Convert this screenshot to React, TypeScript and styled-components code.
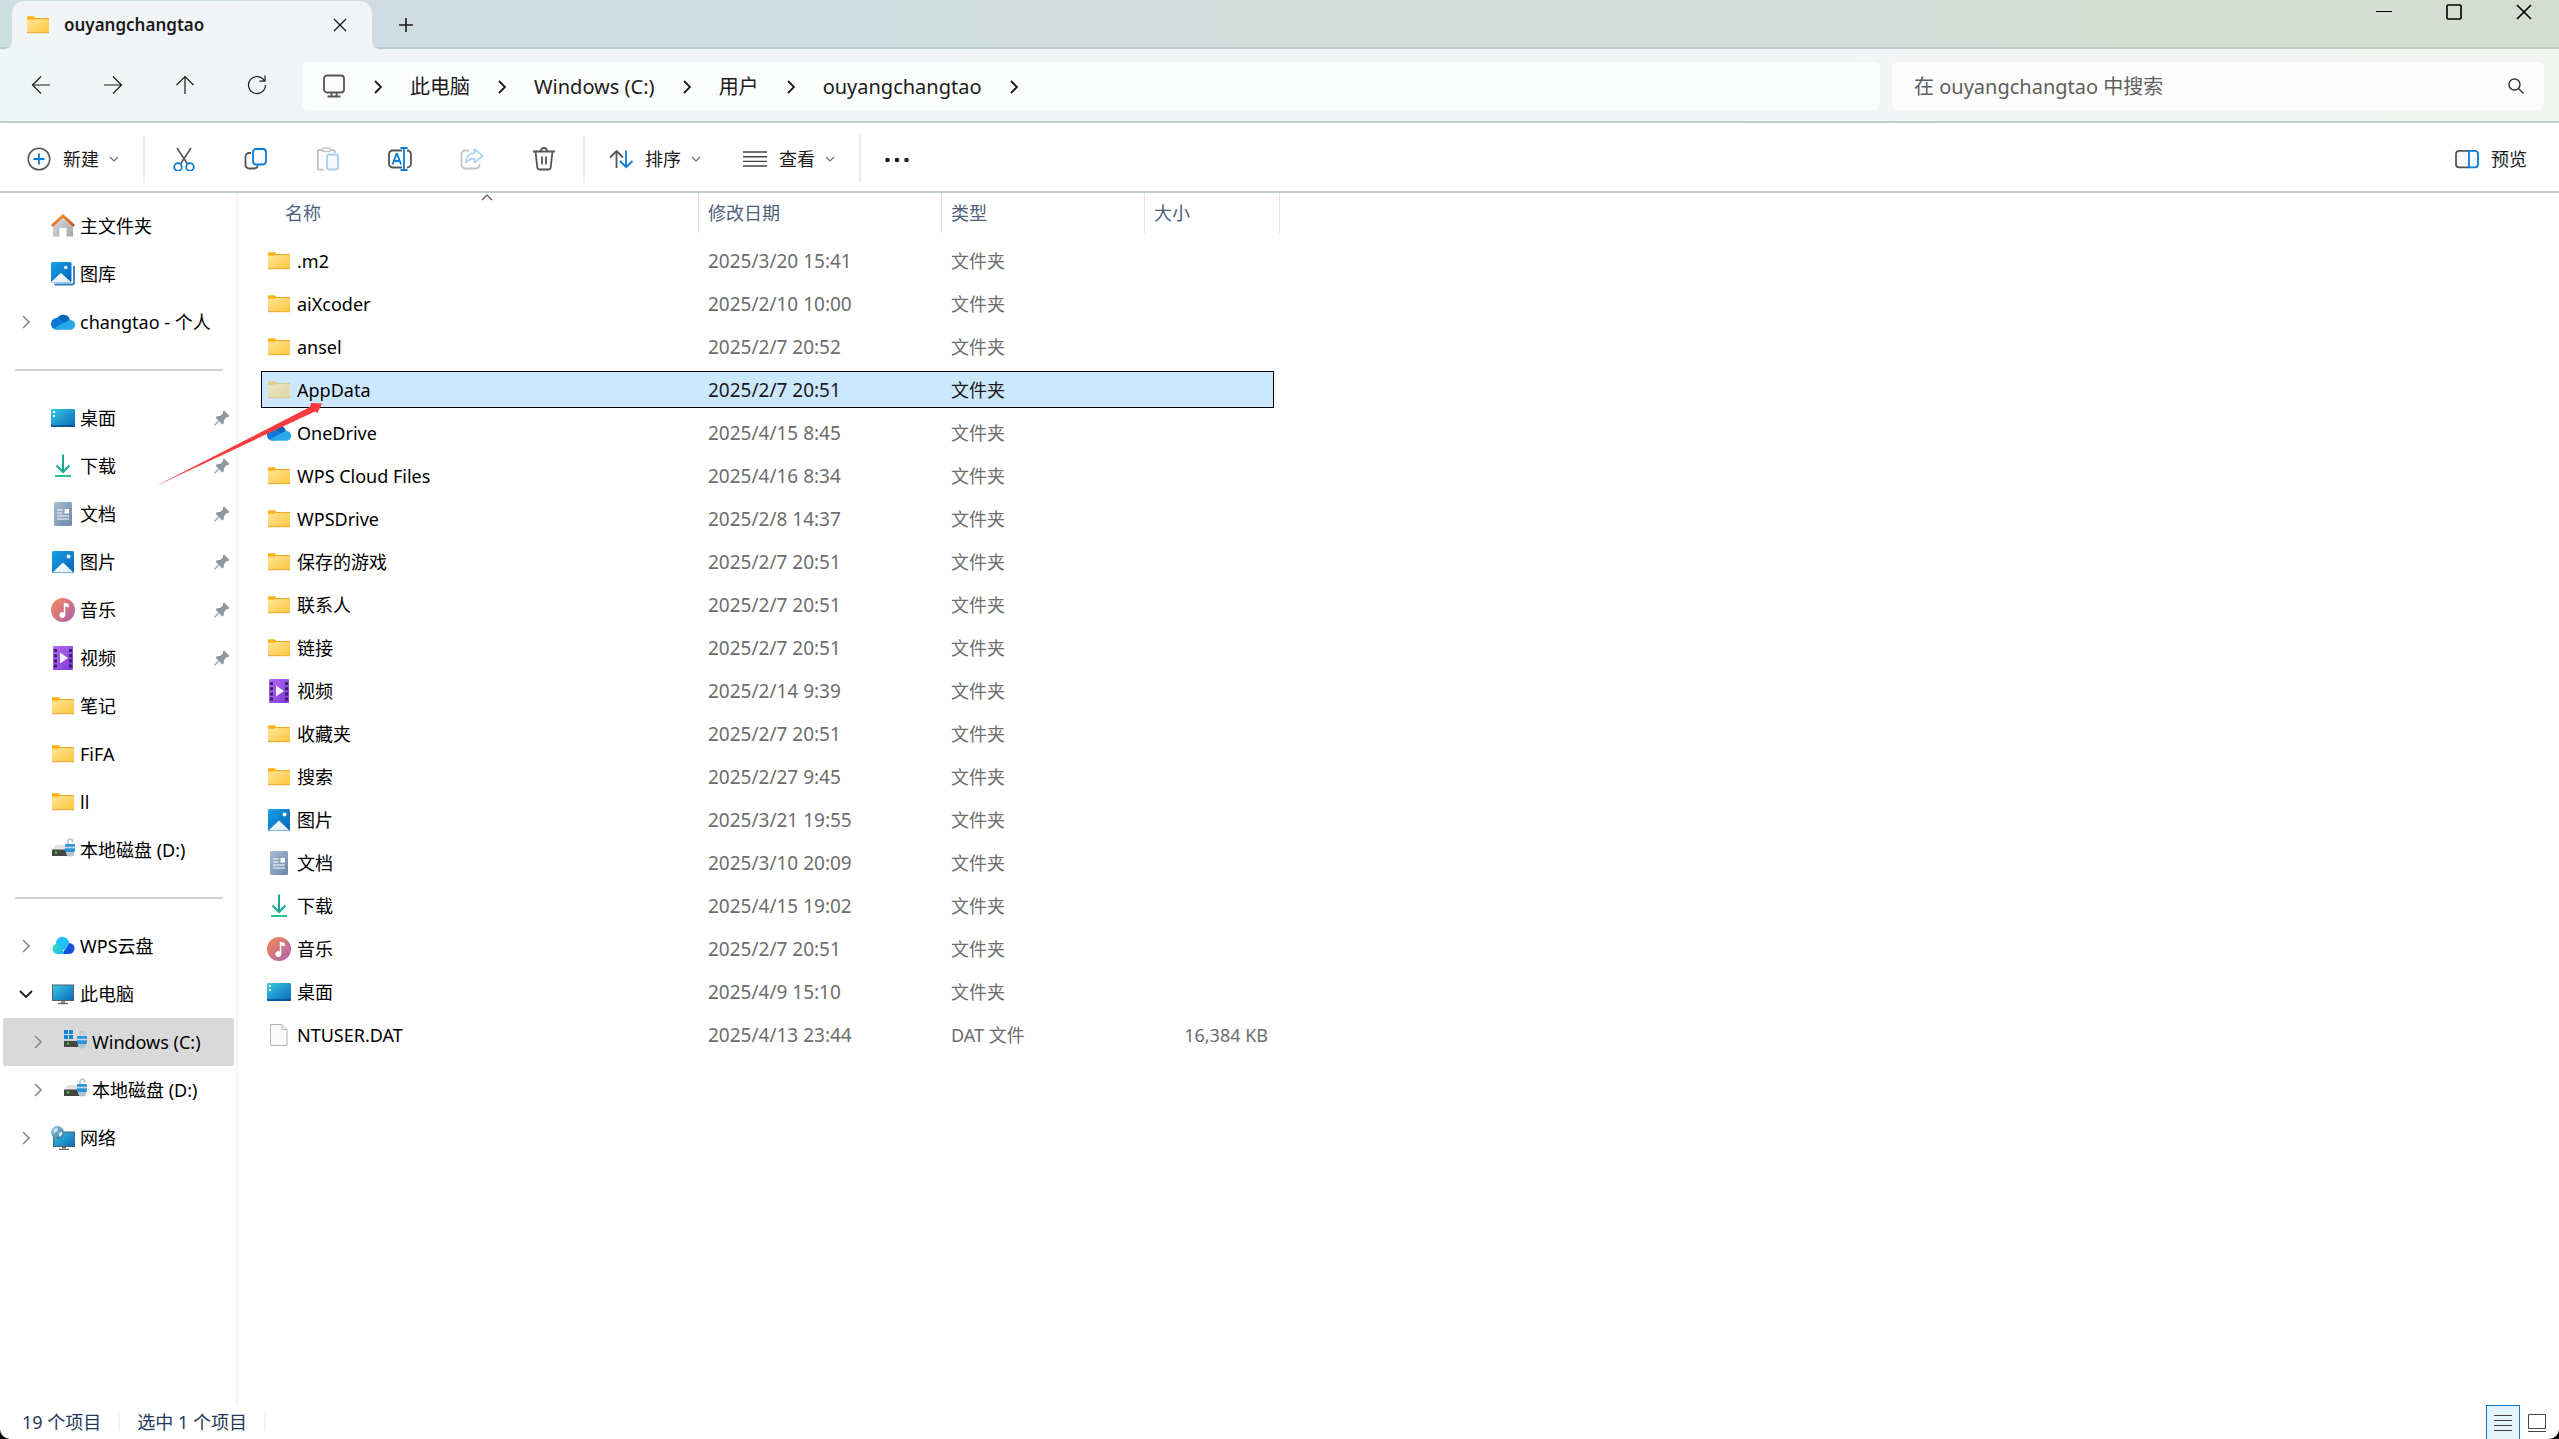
import React, { useState } from "react";
import styled, { createGlobalStyle } from "styled-components";

const GlobalStyle = createGlobalStyle`
  * { box-sizing: border-box; }
  html { background: #000; }
  body {
    margin: 0;
    font-family: "Noto Sans", "Noto Sans CJK SC", sans-serif;
    font-size: 18px;
    line-height: 24px;
    color: #1b1b1b;
  }
  button, input { font: inherit; color: inherit; }
  svg { display: block; flex: none; }
`;

const Shell = styled.div`
  position: relative;
  display: flex;
  flex-direction: column;
  min-height: 100vh;
  overflow: hidden;
  background: #fff;
  border-radius: 0 0 10px 10px;
`;

/* ---------- title bar ---------- */

const TitleBar = styled.header`
  display: flex;
  align-items: flex-start;
  height: 49px;
  padding-left: 12px;
  border-bottom: 2px solid rgba(150, 170, 170, 0.3);
  background: linear-gradient(90deg, #cddedf 0%, #cfdce2 18%, #d0dedf 34%, #d4dcd9 52%, #d3ddd8 76%, #d6ddd3 84%, #d5dcd0 100%);
`;

const Tab = styled.div`
  position: relative;
  display: flex;
  align-items: center;
  width: 360px;
  height: 48px;
  margin-top: 1px;
  padding: 0 20px 0 14px;
  background: #f1f5f7;
  border-radius: 12px 12px 0 0;
  &::before,
  &::after {
    content: "";
    position: absolute;
    bottom: 0;
    width: 6px;
    height: 6px;
  }
  &::before {
    left: -6px;
    background: radial-gradient(circle at 0 0, transparent 5px, #f1f5f7 6px);
  }
  &::after {
    right: -6px;
    background: radial-gradient(circle at 100% 0, transparent 5px, #f1f5f7 6px);
  }
`;

const TabTitle = styled.span`
  flex: 1;
  margin-left: 14px;
  font-size: 17px;
  font-weight: 600;
`;

const PlainButton = styled.button`
  display: flex;
  align-items: center;
  justify-content: center;
  padding: 0;
  border: 0;
  border-radius: 6px;
  background: transparent;
`;

const TabButton = styled(PlainButton)`
  width: 24px;
  height: 48px;
`;

const NewTabButton = styled(TabButton)`
  margin-left: 22px;
  margin-top: 1px;
`;

const WindowButtons = styled.div`
  display: flex;
  margin-left: auto;
`;

const WindowButton = styled(PlainButton)`
  width: 70px;
  height: 24px;
`;

/* ---------- navigation bar ---------- */

const NavBar = styled.div`
  display: flex;
  align-items: center;
  height: 74px;
  padding: 0 15px 0 5px;
  border-bottom: 2px solid #c0cccb;
  background: linear-gradient(90deg, #f0f5f5 0%, #f1f4f7 20%, #f1f4f4 50%, #f2f4f5 74%, #f2f4f1 100%);
`;

const NavButton = styled(PlainButton)`
  width: 72px;
  height: 48px;
`;

const Address = styled.nav`
  display: flex;
  align-items: center;
  flex: 1;
  height: 48px;
  margin: 2px 12px 0 9px;
  padding-left: 20px;
  border-radius: 6px;
  background: #fbfdfc;
`;

const Crumb = styled.a`
  padding-top: 2px;
  color: inherit;
  font-size: 20px;
  text-decoration: none;
`;

const CrumbArrow = styled(PlainButton)`
  width: 64px;
  height: 40px;
  padding-top: 2px;
`;

const SearchBox = styled.label`
  display: flex;
  align-items: center;
  width: 652px;
  height: 48px;
  margin-top: 2px;
  padding: 0 20px 0 22px;
  border-radius: 6px;
  background: #fcfcfc;
`;

const SearchInput = styled.input`
  flex: 1;
  min-width: 0;
  padding: 2px 0 0;
  border: 0;
  outline: 0;
  background: transparent;
  font-size: 20px;
  &::placeholder { color: #5e5f5f; opacity: 1; }
`;

/* ---------- command bar ---------- */

const CommandBar = styled.div`
  display: flex;
  align-items: center;
  height: 70px;
  padding: 4px 0 0 6px;
  border-bottom: 2px solid #c0cccb;
  background: #fff;
`;

const Command = styled(PlainButton)`
  gap: 12px;
  height: 48px;
  padding: 0 21px;
`;

const CommandLabel = styled.span`
  margin-right: -2px;
`;

const IconCommand = styled(PlainButton)`
  width: 72px;
  height: 48px;
`;

const Separator = styled.span`
  width: 2px;
  height: 48px;
  margin: 0 3px;
  background: #ececec;
`;

const EndCommand = styled(Command)`
  margin-left: auto;
  padding-right: 32px;
`;

/* ---------- body ---------- */

const Body = styled.div`
  display: flex;
  flex: 1;
`;

const Sidebar = styled.nav`
  width: 238px;
  padding-top: 9px;
  border-right: 2px solid #f5f5f5;
`;

const Tree = styled.ul`
  margin: 0;
  padding: 0;
  list-style: none;
`;

const TreeRow = styled.li<{ $selected?: boolean; $child?: boolean }>`
  display: flex;
  align-items: center;
  height: 48px;
  margin: 0 2px 0 3px;
  padding-left: ${(p) => (p.$child ? 24 : 12)}px;
  border-radius: 2px;
  background: ${(p) => (p.$selected ? "#d9d9d9" : "transparent")};
`;

const Expander = styled(PlainButton)`
  width: 22px;
  height: 24px;
  margin-right: 14px;
`;

const ExpanderGap = styled.span`
  width: 36px;
`;

const TreeLink = styled.a`
  display: flex;
  align-items: center;
  flex: 1;
  gap: 5px;
  color: #000;
  text-decoration: none;
  white-space: nowrap;
`;

const PinSlot = styled.span`
  margin-right: 4px;
`;

const TreeDivider = styled.li`
  display: flex;
  align-items: center;
  height: 48px;
  padding: 0 13px 0 15px;
  &::before {
    content: "";
    flex: 1;
    height: 2px;
    background: #d2d2d2;
  }
`;

const Content = styled.main`
  flex: 1;
  padding-left: 23px;
`;

const FileTable = styled.table`
  display: block;
  width: 1019px;
  max-width: 100%;
`;

const TableHead = styled.thead`
  display: block;
`;

const TableBody = styled.tbody`
  display: flex;
  flex-direction: column;
  gap: 6px;
  padding: 9px 6px 0 0;
`;

const columns = "438px 243px 203px 1fr";

const HeadRow = styled.tr`
  display: grid;
  grid-template-columns: ${columns};
  height: 40px;
`;

const HeadCell = styled.th<{ $indent?: boolean }>`
  position: relative;
  display: flex;
  align-items: center;
  padding: 0 0 0 ${(p) => (p.$indent ? 24 : 9)}px;
  border-right: 1px solid #e2e2e2;
  color: #4c607a;
  font-weight: 400;
`;

const SortCaret = styled.span`
  position: absolute;
  top: 0;
  left: 220px;
`;

const FileRow = styled.tr<{ $selected: boolean }>`
  display: grid;
  grid-template-columns: ${columns};
  height: 37px;
  color: ${(p) => (p.$selected ? "#1b1b1b" : "#6d6d6d")};
  background: ${(p) => (p.$selected ? "#cce8ff" : "transparent")};
  outline: ${(p) => (p.$selected ? "1px solid #000" : "none")};
  outline-offset: -1px;
`;

const Cell = styled.td<{ $end?: boolean }>`
  display: flex;
  align-items: center;
  justify-content: ${(p) => (p.$end ? "flex-end" : "flex-start")};
  padding: 0 6px 0 9px;
`;

const DateCell = styled(Cell)`
  font-size: 19px;
`;

const NameCell = styled(Cell)<{ $faded?: boolean }>`
  gap: 6px;
  padding-left: 6px;
  color: #000;
  svg { opacity: ${(p) => (p.$faded ? 0.5 : 1)}; }
`;

/* ---------- status bar ---------- */

const StatusBar = styled.footer`
  display: flex;
  align-items: center;
  height: 34px;
  padding: 0 5px 0 22px;
  color: #1e395b;
`;

const StatusMark = styled.span`
  width: 2px;
  height: 18px;
  margin: 0 17px;
  background: #f2f2f2;
`;

const ViewSwitch = styled.div`
  display: flex;
  align-self: stretch;
  margin-left: auto;
`;

const ViewButton = styled(PlainButton)<{ $on?: boolean }>`
  width: 34px;
  height: 36px;
  border-radius: 0;
  border: 1px solid ${(p) => (p.$on ? "#0078d4" : "transparent")};
  background: ${(p) => (p.$on ? "#e5f3fb" : "transparent")};
`;

const PointerArrow = styled.svg`
  position: absolute;
  left: 154px;
  top: 403px;
  pointer-events: none;
`;

/* ---------- line icons ---------- */

type LineProps = { w: number; h?: number; d: string; color?: string; stroke?: number };

function Line({ w, h = w, d, color = "#1b1b1b", stroke = 1.4 }: LineProps) {
  return (
    <svg width={w} height={h} viewBox={`0 0 ${w} ${h}`} fill="none" stroke={color} strokeWidth={stroke} aria-hidden>
      <path d={d} />
    </svg>
  );
}

const SmallChevron = () => <Line w={10} h={6} d="M1 1l4 4 4-4" color="#6b6b6b" stroke={1.2} />;
const CrumbChevron = () => <Line w={8} h={14} d="M1 1l6 6-6 6" stroke={1.8} />;

const Svg24 = ({ children }: { children: React.ReactNode }) => (
  <svg width="24" height="24" viewBox="0 0 24 24" fill="none" strokeWidth="1.5" aria-hidden>
    {children}
  </svg>
);

const G = "#555";
const B = "#0a7cd5";

const cmdIcons = {
  cut: (
    <Svg24>
      <path d="M5 1l10.500 16M19 1L8.500 17" stroke={G} />
      <circle cx="6" cy="20" r="3.800" stroke={B} strokeWidth="1.800" />
      <circle cx="18" cy="20" r="3.800" stroke={B} strokeWidth="1.800" />
    </Svg24>
  ),
  copy: (
    <Svg24>
      <path d="M7 6H5a3.500 3.500 0 0 0-3.500 3.500V18A3.500 3.500 0 0 0 5 21.500h5c2 0 3.500-1 3.800-2.800" stroke={G} strokeWidth="1.800" />
      <rect x="9" y="2" width="13" height="15.500" rx="3.200" fill="#fafafa" stroke={B} strokeWidth="1.800" />
    </Svg24>
  ),
  paste: (
    <Svg24>
      <path d="M6.500 3H3.500A1.800 1.800 0 0 0 1.800 4.800v16A1.800 1.800 0 0 0 3.500 22.600H8M14.500 3h2.500a1.800 1.800 0 0 1 1.800 1.800V6" stroke="#c4c4c4" strokeWidth="1.800" />
      <rect x="6.500" y="1" width="8" height="3.600" rx="1.800" stroke="#c4c4c4" strokeWidth="1.500" />
      <rect x="11" y="7.500" width="11" height="15" rx="1.800" fill="#f6fafe" stroke="#a5cfef" strokeWidth="1.800" />
    </Svg24>
  ),
  rename: (
    <Svg24>
      <path d="M14 3.500H4.500A3.500 3.500 0 0 0 1 7v10a3.500 3.500 0 0 0 3.500 3.500H14M19 3.500a4 4 0 0 1 4 4v9a4 4 0 0 1-4 4" stroke={G} strokeWidth="1.800" />
      <path d="M4.500 17.500L8.500 7h.6l4 10.500M6 14h6M12.500 1h7M16 1v22M12.500 23h7" stroke={B} strokeWidth="1.800" />
    </Svg24>
  ),
  share: (
    <Svg24>
      <path d="M9 3.500H5A3.500 3.500 0 0 0 1.500 7v11A3.500 3.500 0 0 0 5 21.500h11a3.500 3.500 0 0 0 3.500-3.500v-1" stroke="#c4c4c4" strokeWidth="1.800" />
      <path d="M14.500 2l8 6.800-8 6.800v-4c-4 0-6.500 1-8.500 4 0-6 3.500-9.400 8.500-9.600z" stroke="#a5cfef" strokeWidth="1.600" strokeLinejoin="round" />
    </Svg24>
  ),
  trash: (
    <Svg24>
      <path d="M1 4.500h22M3.500 4.500l1.800 15.800A2.500 2.500 0 0 0 7.800 22.500h8.400a2.500 2.500 0 0 0 2.500-2.200L20.500 4.500M8.500 4.500a3.500 3.500 0 0 1 7 0M10 9.500v8M14 9.500v8" stroke={G} strokeWidth="1.800" />
    </Svg24>
  ),
};

/* ---------- colour icons ---------- */

type Kind =
  | "folder" | "hidden" | "home" | "gallery" | "onedrive" | "desktop" | "download" | "doc" | "picture"
  | "music" | "video" | "disk" | "windisk" | "wps" | "pc" | "network" | "file";

const Lock = () => (
  <>
    <path d="M17 7V3.500a2.300 2.300 0 0 1 4.600 0V4.500" fill="none" stroke="#b9c4d2" strokeWidth="1.600" />
    <circle cx="19" cy="14.500" r="4" fill="#b5c0cc" />
    <rect x="14" y="6" width="10" height="8" rx="1" fill="#2b93dc" />
    <path d="M14 9.500h10" stroke="#c5d6e6" strokeWidth="1.600" />
  </>
);

const Note = () => <path d="M12.800 4.500l5 1.500v3.500l-3.500-1v8.500a3 3 0 1 1-1.500-2.600z" fill="#fff" />;

const glyphs: Record<Exclude<Kind, "hidden">, React.ReactNode> = {
  folder: (
    <>
      <path d="M1 5.500V4.200A1 1 0 0 1 2 3.200h6l1.500 2H9l-1 2H1z" fill="#fbb316" />
      <path d="M1 6.800h7l1.500-1.500H23v14H1z" fill="url(#gFolder)" />
      <path d="M9 5.600h14M1 19.700h22" stroke="#e9a21c" strokeWidth="1" />
    </>
  ),
  home: (
    <>
      <path d="M2 11L12 2.500 22 11v11.500h-6.500V14h-7v8.500H2z" fill="url(#gGray)" />
      <path d="M0.800 12L12 1.800 23.200 12" fill="none" stroke="url(#gOrange)" strokeWidth="2.600" />
    </>
  ),
  gallery: (
    <>
      <path d="M3.500 22.500H21a2 2 0 0 0 2-2V4" fill="none" stroke="#2f79bd" strokeWidth="1.800" />
      <rect x="0" y="0" width="20.500" height="20.500" rx="1.500" fill="url(#gBlue)" />
      <circle cx="14.800" cy="5.500" r="1.700" fill="#fff" />
      <path d="M0.500 19.500L10 11l9.500 8.500q-.5.800-1 .8H1.500q-.8 0-1-.8z" fill="url(#gHill)" />
    </>
  ),
  onedrive: (
    <>
      <path d="M6 8.500a7 7 0 0 1 13 1.500l-7 5.500-7-6z" fill="#0364b8" />
      <path d="M0 14.500a6 6 0 0 1 8.500-6l8 5.500-10 5.500H5.500A5.300 5.300 0 0 1 0 14.500z" fill="#0f78d4" />
      <path d="M2.500 18.500L15.500 11.500a5.500 5.500 0 0 1 4-1.500 4.800 4.800 0 0 1-.5 9.800H5.500a6 6 0 0 1-3-1.300z" fill="#28a8ea" />
    </>
  ),
  desktop: (
    <>
      <rect x="0" y="3" width="24" height="18" rx="1.200" fill="url(#gDesk)" />
      <path d="M0 20h24" stroke="#0b4a86" strokeWidth="1.400" />
      <path d="M2 5h2v2H2zM2 9h2v2H2z" fill="#fff" />
    </>
  ),
  download: (
    <>
      <path d="M12 .5V18M5.500 11.500L12 18l6.500-6.500" fill="none" stroke="#18ab92" strokeWidth="2" />
      <path d="M4 22h16" stroke="#2cc08e" strokeWidth="2" />
    </>
  ),
  doc: (
    <>
      <rect x="3" y="0" width="18" height="24" rx="1.500" fill="url(#gDoc)" />
      <path d="M6 8h5.500M6 11h5.500M6 14h12M6 17h12" stroke="#fff" strokeWidth="1.200" />
      <path d="M13.500 7H18v4.500h-4.500z" fill="#fff" />
    </>
  ),
  picture: (
    <>
      <rect x="1" y="1" width="22" height="22" rx="1.500" fill="url(#gBlue)" />
      <circle cx="17.500" cy="6.500" r="2" fill="#fff" />
      <path d="M2 22L12 12.500 22 22q-.4.600-1 .600H3q-.6 0-1-.6z" fill="url(#gHill)" />
    </>
  ),
  music: (
    <>
      <circle cx="12" cy="12" r="12" fill="url(#gMusic)" />
      <Note />
    </>
  ),
  video: (
    <>
      <rect x="2" y="0" width="20" height="24" rx="1" fill="url(#gVideo)" />
      <path d="M4.500 3v18.500M19.500 3v18.500" stroke="#3d1f66" strokeWidth="3" strokeDasharray="3 2.200" />
      <path d="M9 6.500L17 12l-8 5.500z" fill="#f3edff" />
    </>
  ),
  disk: (
    <>
      <path d="M4.500 7H20l3 5H1z" fill="#dfe2e6" />
      <rect x="1" y="11.500" width="21" height="6.500" fill="#454545" />
      <rect x="4" y="13.500" width="2" height="2" fill="#3ee23e" />
      <Lock />
    </>
  ),
  windisk: (
    <>
      <path d="M1 0h4v4H1zM6 0h4v4H6zM1 5h4v4H1zM6 5h4v4H6z" fill="#0f86dc" />
      <path d="M1 10h21v2H1z" fill="#c9ccd0" />
      <rect x="1" y="11" width="21" height="6" fill="#454545" />
      <rect x="4" y="12.500" width="2" height="2" fill="#3ee23e" />
      <Lock />
    </>
  ),
  wps: (
    <>
      <path d="M5 9.500a6.500 6.500 0 0 1 13-.5l-4 7-7-1z" fill="#1fc0ff" />
      <path d="M18 9a5.500 5.500 0 0 1 .3 11H10q5-4 8-11z" fill="#0f57d8" />
      <path d="M6 9.500a5.300 5.300 0 0 0 .5 10.500H13q-1-7-7-10.500z" fill="url(#gWps)" />
    </>
  ),
  pc: (
    <>
      <rect x="1.500" y="3" width="21" height="15.500" fill="url(#gDesk)" stroke="#52606b" strokeWidth="1" />
      <path d="M10 19h4v2h-4z" fill="#8a949b" />
      <path d="M7 21.500h10" stroke="#5b6469" strokeWidth="1.400" />
    </>
  ),
  network: (
    <>
      <rect x="2.500" y="6" width="21" height="14.500" fill="url(#gDesk)" stroke="#52606b" strokeWidth="1" />
      <path d="M8 23.400h10M11 21.500h4" stroke="#5b6469" strokeWidth="1.400" />
      <circle cx="6.500" cy="6.500" r="6.500" fill="url(#gGlobe)" />
      <path d="M2.500 3.500q3-2 4.500-1l-1 3-3 1.500zM7.500 7l3.500-1.500.5 3-3 2.500z" fill="#d3e7f1" />
    </>
  ),
  file: (
    <>
      <path d="M3.500 1.500h11.500l5 5v16h-16.500z" fill="#fbfbfb" stroke="#b4b4b4" strokeWidth="1" />
      <path d="M15 1.500v5h5" fill="#eee" stroke="#b4b4b4" strokeWidth="1" />
    </>
  ),
};

function Glyph({ kind }: { kind: Kind }) {
  return (
    <svg width="24" height="24" viewBox="0 0 24 24" aria-hidden>
      {glyphs[kind === "hidden" ? "folder" : kind]}
    </svg>
  );
}

const gradients: [string, string, string][] = [
  ["gFolder", "#ffe59b", "#fec73c"],
  ["gGray", "#dedede", "#a5a5a5"],
  ["gOrange", "#f29a2b", "#cf4a12"],
  ["gBlue", "#18a0e6", "#0763b8"],
  ["gHill", "#ffffff", "#dcebf8"],
  ["gDesk", "#36cbe2", "#0c66bd"],
  ["gDoc", "#a9bdd2", "#6a86a8"],
  ["gMusic", "#f58a51", "#a962b0"],
  ["gVideo", "#b56bf0", "#7c38d8"],
  ["gWps", "#37e5a8", "#1bb4ff"],
  ["gGlobe", "#9fd0e8", "#2b6f97"],
];

const Defs = styled.svg`
  position: absolute;
`;

const Pin = () => (
  <svg width="16" height="16" viewBox="0 0 16 16" aria-hidden>
    <path d="M10 .5L15.500 6 13.800 7.300 12.500 7.200 10 10.300 9.600 13.500 8.400 14.500 5.300 11.300 1 15.600 0 15.800 0 15 4.500 10.500 1.600 7.500 2.800 6.300 6 6 9 3.500 8.800 1.800z" fill="#8c979e" />
  </svg>
);

/* ---------- data ---------- */

type TreeItem = { icon: Kind; label: string; pinned?: boolean; arrow?: "closed" | "open"; child?: boolean; selected?: boolean };

const tree: (TreeItem | null)[] = [
  { icon: "home", label: "主文件夹" },
  { icon: "gallery", label: "图库" },
  { icon: "onedrive", label: "changtao - 个人", arrow: "closed" },
  null,
  { icon: "desktop", label: "桌面", pinned: true },
  { icon: "download", label: "下载", pinned: true },
  { icon: "doc", label: "文档", pinned: true },
  { icon: "picture", label: "图片", pinned: true },
  { icon: "music", label: "音乐", pinned: true },
  { icon: "video", label: "视频", pinned: true },
  { icon: "folder", label: "笔记" },
  { icon: "folder", label: "FiFA" },
  { icon: "folder", label: "ll" },
  { icon: "disk", label: "本地磁盘 (D:)" },
  null,
  { icon: "wps", label: "WPS云盘", arrow: "closed" },
  { icon: "pc", label: "此电脑", arrow: "open" },
  { icon: "windisk", label: "Windows (C:)", arrow: "closed", child: true, selected: true },
  { icon: "disk", label: "本地磁盘 (D:)", arrow: "closed", child: true },
  { icon: "network", label: "网络", arrow: "closed" },
];

type FileItem = { icon: Kind; name: string; date: string; type?: string; size?: string };

const files: FileItem[] = [
  { icon: "folder", name: ".m2", date: "2025/3/20 15:41" },
  { icon: "folder", name: "aiXcoder", date: "2025/2/10 10:00" },
  { icon: "folder", name: "ansel", date: "2025/2/7 20:52" },
  { icon: "hidden", name: "AppData", date: "2025/2/7 20:51" },
  { icon: "onedrive", name: "OneDrive", date: "2025/4/15 8:45" },
  { icon: "folder", name: "WPS Cloud Files", date: "2025/4/16 8:34" },
  { icon: "folder", name: "WPSDrive", date: "2025/2/8 14:37" },
  { icon: "folder", name: "保存的游戏", date: "2025/2/7 20:51" },
  { icon: "folder", name: "联系人", date: "2025/2/7 20:51" },
  { icon: "folder", name: "链接", date: "2025/2/7 20:51" },
  { icon: "video", name: "视频", date: "2025/2/14 9:39" },
  { icon: "folder", name: "收藏夹", date: "2025/2/7 20:51" },
  { icon: "folder", name: "搜索", date: "2025/2/27 9:45" },
  { icon: "picture", name: "图片", date: "2025/3/21 19:55" },
  { icon: "doc", name: "文档", date: "2025/3/10 20:09" },
  { icon: "download", name: "下载", date: "2025/4/15 19:02" },
  { icon: "music", name: "音乐", date: "2025/2/7 20:51" },
  { icon: "desktop", name: "桌面", date: "2025/4/9 15:10" },
  { icon: "file", name: "NTUSER.DAT", date: "2025/4/13 23:44", type: "DAT 文件", size: "16,384 KB" },
];

const crumbs = ["此电脑", "Windows (C:)", "用户", "ouyangchangtao"];

export default function App() {
  const [selected, setSelected] = useState("AppData");

  return (
    <Shell>
      <GlobalStyle />
      <Defs width="0" height="0" aria-hidden>
        <defs>
          {gradients.map(([id, from, to]) => (
            <linearGradient key={id} id={id} x1="0" y1="0" x2="1" y2="1">
              <stop offset="0" stopColor={from} />
              <stop offset="1" stopColor={to} />
            </linearGradient>
          ))}
        </defs>
      </Defs>

      <TitleBar>
        <Tab>
          <Glyph kind="folder" />
          <TabTitle>ouyangchangtao</TabTitle>
          <TabButton aria-label="关闭标签页"><Line w={14} d="M1 1l12 12M13 1L1 13" /></TabButton>
        </Tab>
        <NewTabButton aria-label="新建标签页"><Line w={16} d="M8 1v14M1 8h14" stroke={1.6} /></NewTabButton>
        <WindowButtons>
          <WindowButton aria-label="最小化"><Line w={16} d="M0 7.500h16" color="#000" stroke={1} /></WindowButton>
          <WindowButton aria-label="最大化"><Line w={16} d="M2 1h12a1 1 0 0 1 1 1v12a1 1 0 0 1-1 1H2a1 1 0 0 1-1-1V2a1 1 0 0 1 1-1z" color="#000" stroke={1.6} /></WindowButton>
          <WindowButton aria-label="关闭"><Line w={16} d="M1 1l14 14M15 1L1 15" color="#000" stroke={1.6} /></WindowButton>
        </WindowButtons>
      </TitleBar>

      <NavBar>
        <NavButton aria-label="后退"><Line w={20} d="M19 10H2M10 1.500L1.500 10l8.500 8.500" stroke={1.2} /></NavButton>
        <NavButton aria-label="前进"><Line w={20} d="M1 10h17M10 1.500l8.500 8.500-8.500 8.500" stroke={1.2} /></NavButton>
        <NavButton aria-label="上移"><Line w={20} d="M10 19V2M1.500 10L10 1.500l8.500 8.500" stroke={1.2} /></NavButton>
        <NavButton aria-label="刷新"><Line w={20} d="M17.500 6A8.500 8.500 0 1 0 18.500 10M18 .5V6.200H12.500" stroke={1.2} /></NavButton>
        <Address aria-label="地址栏">
          <Line w={24} color="#555" stroke={1.8} d="M5 1.500h14a3 3 0 0 1 3 3v11a3 3 0 0 1-3 3H5a3 3 0 0 1-3-3v-11a3 3 0 0 1 3-3zM9.500 18.500v3M14.500 18.500v3M5.500 22.500h13" />
          {["", ...crumbs].map((c, i) => (
            <React.Fragment key={i}>
              {c && <Crumb href="#">{c}</Crumb>}
              <CrumbArrow aria-label="展开"><CrumbChevron /></CrumbArrow>
            </React.Fragment>
          ))}
        </Address>
        <SearchBox>
          <SearchInput type="text" aria-label="搜索" placeholder="在 ouyangchangtao 中搜索" />
          <Line w={16} d="M6.500 1a5.500 5.500 0 1 0 0 11a5.500 5.500 0 1 0 0-11zM10.500 10.500l5 5" color="#333" />
        </SearchBox>
      </NavBar>

      <CommandBar>
        <Command>
          <Svg24>
            <circle cx="12" cy="12" r="10.800" fill="#fafafa" stroke={G} />
            <path d="M12 6.500v11M6.500 12h11" stroke={B} strokeWidth="1.800" />
          </Svg24>
          <CommandLabel>新建</CommandLabel>
          <SmallChevron />
        </Command>
        <Separator />
        <IconCommand aria-label="剪切">{cmdIcons.cut}</IconCommand>
        <IconCommand aria-label="复制">{cmdIcons.copy}</IconCommand>
        <IconCommand aria-label="粘贴">{cmdIcons.paste}</IconCommand>
        <IconCommand aria-label="重命名">{cmdIcons.rename}</IconCommand>
        <IconCommand aria-label="共享">{cmdIcons.share}</IconCommand>
        <IconCommand aria-label="删除">{cmdIcons.trash}</IconCommand>
        <Separator />
        <Command>
          <Svg24>
            <path d="M7.500 21V4M1 10.500L7.500 4l6.500 6.500" stroke={G} strokeWidth="1.800" />
            <path d="M17 3.500V20M11 14l6.200 6.200L23.500 14" stroke={B} strokeWidth="1.800" />
          </Svg24>
          <CommandLabel>排序</CommandLabel>
          <SmallChevron />
        </Command>
        <Command>
          <Svg24><path d="M0 5h24M0 9.700h24M0 14.400h24M0 19h24" stroke="#444" strokeWidth="1.400" /></Svg24>
          <CommandLabel>查看</CommandLabel>
          <SmallChevron />
        </Command>
        <Separator />
        <Command aria-label="更多">
          <Svg24>
            <circle cx="2.500" cy="13" r="2.300" fill="#1b1b1b" />
            <circle cx="12" cy="13" r="2.300" fill="#1b1b1b" />
            <circle cx="21.500" cy="13" r="2.300" fill="#1b1b1b" />
          </Svg24>
        </Command>
        <EndCommand>
          <Svg24>
            <path d="M14 3.800H4A3 3 0 0 0 1 6.800v10.500a3 3 0 0 0 3 3h10" fill="#f7f7f7" stroke={G} strokeWidth="1.800" />
            <path d="M14 3.800h6a3 3 0 0 1 3 3v10.500a3 3 0 0 1-3 3h-6z" stroke={B} strokeWidth="1.800" fill="#f7fbff" />
          </Svg24>
          预览
        </EndCommand>
      </CommandBar>

      <Body>
        <Sidebar aria-label="导航窗格">
          <Tree>
            {tree.map((t, i) =>
              t === null ? (
                <TreeDivider key={i} />
              ) : (
                <TreeRow key={i} $selected={t.selected} $child={t.child}>
                  {t.arrow ? (
                    <Expander aria-label="展开">
                      {t.arrow === "open" ? (
                        <Line w={14} h={8} d="M1 1l6 6 6-6" stroke={1.8} />
                      ) : (
                        <Line w={8} h={14} d="M1 1l6 6-6 6" color="#8c8c8c" stroke={1.6} />
                      )}
                    </Expander>
                  ) : (
                    <ExpanderGap />
                  )}
                  <TreeLink href="#">
                    <Glyph kind={t.icon} />
                    {t.label}
                  </TreeLink>
                  {t.pinned && <PinSlot><Pin /></PinSlot>}
                </TreeRow>
              )
            )}
          </Tree>
        </Sidebar>

        <Content>
          <FileTable>
            <TableHead>
              <HeadRow>
                <HeadCell $indent>
                  名称
                  <SortCaret><Line w={12} h={8} d="M1 7l5-5 5 5" color="#555" stroke={1.2} /></SortCaret>
                </HeadCell>
                <HeadCell>修改日期</HeadCell>
                <HeadCell>类型</HeadCell>
                <HeadCell>大小</HeadCell>
              </HeadRow>
            </TableHead>
            <TableBody>
              {files.map((f) => (
                <FileRow key={f.name} $selected={f.name === selected} onClick={() => setSelected(f.name)}>
                  <NameCell $faded={f.icon === "hidden"}>
                    <Glyph kind={f.icon} />
                    {f.name}
                  </NameCell>
                  <DateCell>{f.date}</DateCell>
                  <Cell>{f.type ?? "文件夹"}</Cell>
                  <Cell $end>{f.size}</Cell>
                </FileRow>
              ))}
            </TableBody>
          </FileTable>
        </Content>
      </Body>

      <StatusBar>
        <span>19 个项目</span>
        <StatusMark />
        <span>选中 1 个项目</span>
        <StatusMark />
        <ViewSwitch>
          <ViewButton $on aria-label="详细信息"><Line w={18} d="M0 1.500h18M0 6.500h18M0 11.500h18M0 16.500h18" color="#444" stroke={1} /></ViewButton>
          <ViewButton aria-label="大图标"><Line w={18} h={20} d="M.5 1.500h17v14H.5zM0 18.500h18" color="#444" stroke={1} /></ViewButton>
        </ViewSwitch>
      </StatusBar>

      <PointerArrow width="168" height="84" viewBox="0 0 168 84" aria-hidden>
        <path d="M0 84L156 4 157 0 168 .5 163.500 10 161 8.500z" fill="#fb3b3b" />
      </PointerArrow>
    </Shell>
  );
}
